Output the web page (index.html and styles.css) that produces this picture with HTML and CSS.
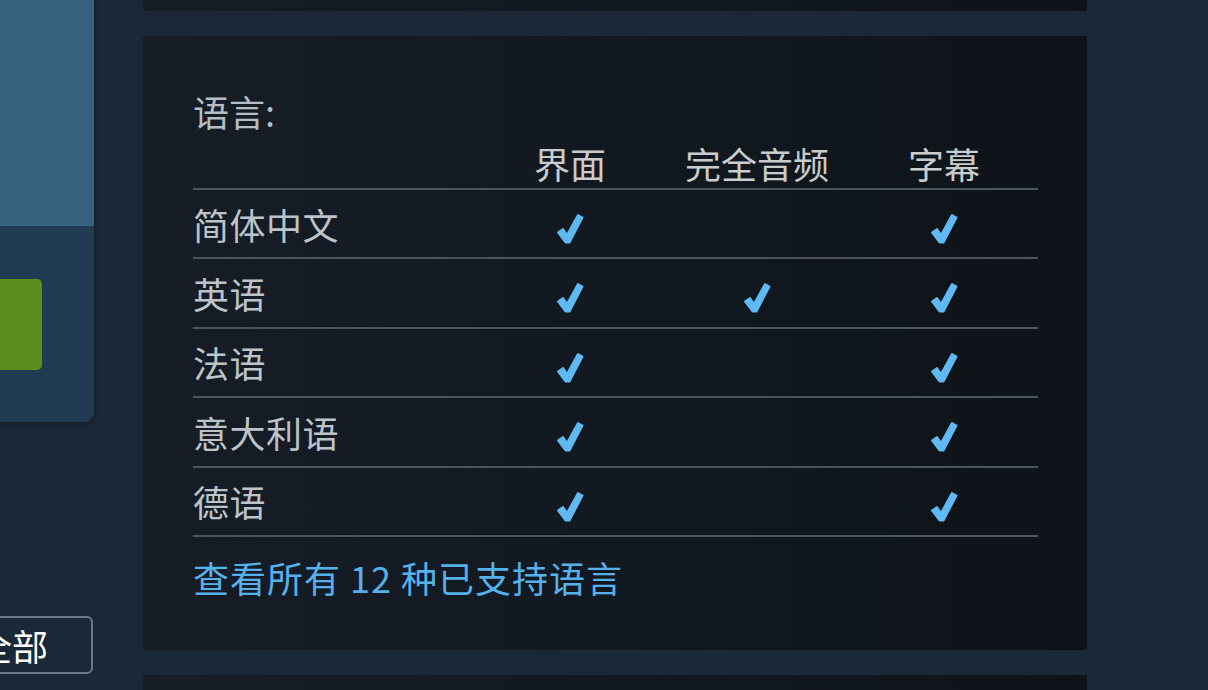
FILE: index.html
```html
<!DOCTYPE html>
<html lang="zh-CN">
<head>
    <meta charset="UTF-8">
    <meta name="viewport" content="width=device-width, initial-scale=1.0">
    <title>语言</title>
    <link rel="stylesheet" href="styles.css">
</head>
<body>
    <div class="page">
        <div class="sidebar">
            <div class="purchase-card">
                <div class="card-top"></div>
                <div class="card-bottom">
                    <div class="buy-button"></div>
                </div>
            </div>
            <button class="all-button">全部</button>
        </div>

        <div class="main">
            <div class="block block-prev"></div>

            <div class="block lang-block">
                <div class="lang-title">语言:</div>
                <div class="lang-table">
                    <div class="lang-row lang-head">
                        <div></div>
                        <div class="cell">界面</div>
                        <div class="cell">完全音频</div>
                        <div class="cell">字幕</div>
                    </div>
                    <div class="lang-row">
                        <div class="name">简体中文</div>
                        <div class="cell"><span class="check"></span></div>
                        <div class="cell"></div>
                        <div class="cell"><span class="check"></span></div>
                    </div>
                    <div class="lang-row">
                        <div class="name">英语</div>
                        <div class="cell"><span class="check"></span></div>
                        <div class="cell"><span class="check"></span></div>
                        <div class="cell"><span class="check"></span></div>
                    </div>
                    <div class="lang-row">
                        <div class="name">法语</div>
                        <div class="cell"><span class="check"></span></div>
                        <div class="cell"></div>
                        <div class="cell"><span class="check"></span></div>
                    </div>
                    <div class="lang-row">
                        <div class="name">意大利语</div>
                        <div class="cell"><span class="check"></span></div>
                        <div class="cell"></div>
                        <div class="cell"><span class="check"></span></div>
                    </div>
                    <div class="lang-row">
                        <div class="name">德语</div>
                        <div class="cell"><span class="check"></span></div>
                        <div class="cell"></div>
                        <div class="cell"><span class="check"></span></div>
                    </div>
                </div>
                <a class="all-langs" href="#">查看所有 12 种已支持语言</a>
            </div>

            <div class="block block-next"></div>
        </div>
    </div>

    <script>
        // same heavy checkmark for every supported cell
        var svg = '<svg width="28" height="33" viewBox="0 0 28 33">' +
            '<path d="M2 20.5 L7 17 L11 23 L22 3 L26.5 5.5 L13.5 30.5 L9.5 30.5 Z" fill="#5fb9f2" stroke="#5fb9f2" stroke-width="2" stroke-linejoin="round"/>' +
            '</svg>';
        document.querySelectorAll('.check').forEach(function (el) {
            el.innerHTML = svg;
        });
    </script>
</body>
</html>
```

FILE: styles.css
```css
body {
    margin: 0;
    padding: 0;
    background-color: #1b2838;
    font-family: "Noto Sans CJK SC", "Liberation Sans", sans-serif;
    overflow: hidden;
    height: 690px;
}
.page {
    display: flex;
    align-items: flex-start;
    gap: 49px;
}

/* left column, cut off by the window edge */
.sidebar {
    width: 160px;
    margin-left: -66px;
    display: flex;
    flex-direction: column;
}
.purchase-card {
    border-bottom-right-radius: 10px;
    overflow: hidden;
    box-shadow: 0 2px 6px rgba(0, 0, 0, 0.35);
}
.card-top {
    height: 226px;
    background: #36617f;
}
.card-bottom {
    height: 196px;
    background: linear-gradient(90deg, #1f3a51, #213b52);
    padding-top: 53px;
    box-sizing: border-box;
}
.buy-button {
    width: 108px;
    height: 91px;
    background: #5d8d1c;
    border-radius: 5px;
}
.all-button {
    margin-top: 194px;
    height: 58px;
    width: 159px;
    background: transparent;
    border: 2px solid #6d7b89;
    border-radius: 6px;
    color: #ffffff;
    font-family: inherit;
    font-size: 36px;
    line-height: 40px;
    text-align: left;
    padding: 0 0 0 40px;
}

/* main column */
.main {
    width: 944px;
    display: flex;
    flex-direction: column;
    gap: 25px;
}
.block {
    background: linear-gradient(90deg, #161d27 0%, #121820 55%, #0e1319 100%);
}
.block-prev {
    height: 11px;
}
.block-next {
    height: 40px;
}
.lang-block {
    height: 614px;
    box-sizing: border-box;
    padding: 55px 49px 0 50px;
}
.lang-title {
    font-size: 36px;
    line-height: 40px;
    color: #b4bec7;
}
.lang-row {
    display: grid;
    grid-template-columns: 283px 188px 186px 188px;
    align-items: center;
    height: 67.4px;
    border-bottom: 2px solid #4c545d;
    font-size: 36px;
    line-height: 40px;
    color: #bcc3c9;
}
.lang-head {
    height: 59px;
    align-items: end;
    padding-bottom: 5px;
    box-sizing: border-box;
    color: #c9cbcc;
}
.cell {
    text-align: center;
}
.name {
    letter-spacing: 0.5px;
}
.check {
    display: inline-block;
    width: 28px;
    height: 33px;
    vertical-align: middle;
}
.check svg {
    display: block;
}
.all-langs {
    display: inline-block;
    margin-top: 20px;
    font-size: 36px;
    line-height: 40px;
    letter-spacing: 1px;
    color: #56b0ea;
    text-decoration: none;
}
```
